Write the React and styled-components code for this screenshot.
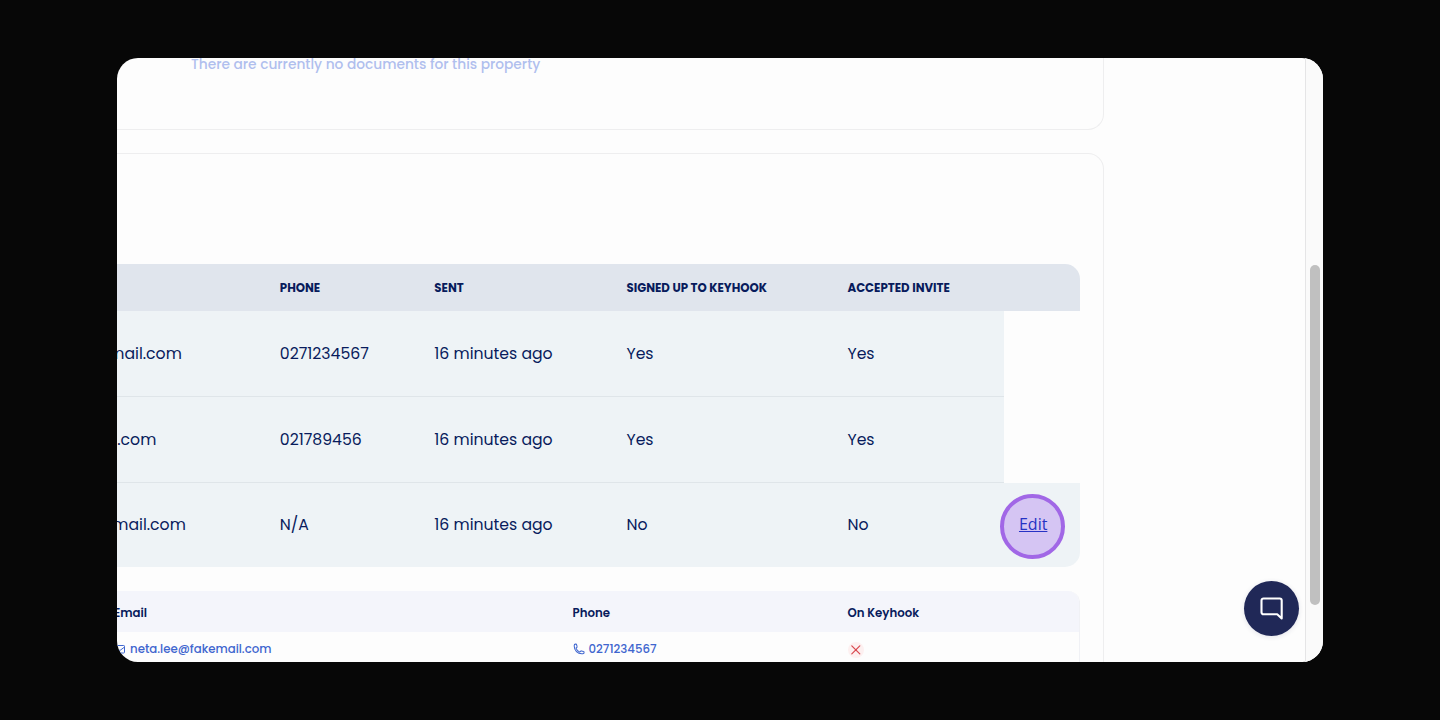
import React from 'react';
import styled, { createGlobalStyle } from 'styled-components';

const colors = {
  backdrop: '#070707',
  white: '#fdfdfd',
  navy: '#081b5c',
  link: '#3f66cf',
  faded: '#b0bfee',
  border: '#eeeeef',
  tableHead: '#e0e5ed',
  tableRow: '#eef3f6',
  contactsHead: '#f4f5fb',
  purple: '#a167e6',
};

const GlobalStyle = createGlobalStyle`
  * {
    box-sizing: border-box;
  }
  body {
    margin: 0;
    background: ${colors.backdrop};
    font-family: Poppins, Inter, sans-serif;
    color: ${colors.navy};
  }
`;

const Page = styled.div`
  height: 720px;
  padding: 58px 117px;
  overflow: hidden;
`;

const Window = styled.div`
  position: relative;
  display: flex;
  height: 604px;
  border-radius: 21px;
  overflow: hidden;
  background: ${colors.white};
`;

const Content = styled.main`
  flex: 1;
  min-width: 0;
  display: flex;
  flex-direction: column;
  align-items: flex-start;
  gap: 23px;
`;

const Card = styled.section`
  flex: none;
  width: 987px;
  border: 1px solid ${colors.border};
  border-left: 0;
`;

const DocumentsCard = styled(Card)`
  height: 72px;
  border-top: 0;
  border-radius: 0 0 16px 0;
  padding-left: 74px;
`;

const EmptyText = styled.p`
  margin: -4px 0 0;
  font-size: 13.75px;
  line-height: 22px;
  font-weight: 500;
  color: ${colors.faded};
`;

const TenantsCard = styled(Card)`
  height: 560px;
  border-radius: 0 16px 0 0;
  padding: 110px 23px 0 0;
`;

const InviteGrid = styled.div`
  display: grid;
  grid-template-columns: 138.8px 154.5px 192.2px 221px 180.5px 76px;
`;

const InviteHead = styled(InviteGrid)`
  height: 47px;
  padding-top: 1px;
  border-radius: 0 15px 0 0;
  background: ${colors.tableHead};
`;

const InviteRow = styled(InviteGrid)`
  height: ${(p) => (p.$last ? 84 : 86)}px;
  border-radius: 0 0 15px 0;
  overflow: hidden;
`;

const HeadCell = styled.div`
  display: flex;
  align-items: center;
  padding-left: 24px;
  font-size: 11.78px;
  font-weight: 700;
  white-space: nowrap;
`;

const Cell = styled.div`
  display: flex;
  align-items: center;
  padding: 0 0 ${(p) => (p.$last ? 1 : 0)}px 24px;
  font-size: 15.7px;
  white-space: nowrap;
  background: ${colors.tableRow};
  border-bottom: ${(p) => (p.$last ? 0 : 1)}px solid #dfe5e9;
`;

const EmailCell = styled(Cell)`
  justify-content: flex-end;
  padding-left: 0;
  padding-right: ${(p) => p.$space}px;
`;

const ActionCell = styled.div`
  display: flex;
  justify-content: center;
  align-items: center;
  padding-right: 18.6px;
  background: ${(p) => (p.$filled ? colors.tableRow : 'transparent')};
`;

const EditLink = styled.a`
  display: flex;
  justify-content: center;
  align-items: center;
  flex: none;
  width: 65px;
  height: 65px;
  margin-top: 2px;
  border: 4px solid ${colors.purple};
  border-radius: 50%;
  background: #d5c5f3;
  color: #2632c4;
  font-family: 'Open Sans', 'Noto Sans', sans-serif;
  font-size: 16px;
  line-height: 22px;
  text-decoration: underline;
  cursor: pointer;

  span {
    margin: -4px 0 0 1px;
  }
`;

const Contacts = styled.div`
  margin-top: 24px;
  height: 160px;
  border-right: 1px solid #f0f1f5;
  border-radius: 0 12px 0 0;
  overflow: hidden;
`;

const ContactsGrid = styled.div`
  display: grid;
  grid-template-columns: 455.5px 275px 1fr;
  align-items: center;
  font-size: 11.78px;
  white-space: nowrap;
`;

const ContactsHead = styled(ContactsGrid)`
  height: 41px;
  padding-top: 3px;
  font-weight: 600;
  background: ${colors.contactsHead};
`;

const ContactsRow = styled(ContactsGrid)`
  height: 34px;
  font-weight: 500;
  color: ${colors.link};
`;

const EmailTitle = styled.span`
  margin-left: -3px;
`;

const ContactItem = styled.span`
  display: flex;
  align-items: center;
  gap: 4px;
  margin-left: ${(p) => p.$shift || 0}px;
`;

const CrossBadge = styled.span`
  display: flex;
  justify-content: center;
  align-items: center;
  width: 16px;
  height: 16px;
  margin-top: 1px;
  border-radius: 50%;
  background: #fdf0f0;
`;

const ScrollTrack = styled.div`
  width: 18px;
  padding: 207px 3px 0 4px;
  border-left: 1px solid #e5e5e6;
  background: #fafafa;
`;

const ScrollThumb = styled.div`
  width: 10px;
  height: 340px;
  border-radius: 5px;
  background: #c0c0c0;
`;

const ChatButton = styled.button`
  position: absolute;
  right: 24px;
  bottom: 26px;
  display: flex;
  justify-content: center;
  align-items: center;
  width: 55px;
  height: 55px;
  padding: 0;
  border: 0;
  border-radius: 50%;
  background: #202857;
  box-shadow: 0 1px 5px rgba(32, 40, 87, 0.12);
`;

const invites = [
  { email: 'mail.com', space: 74, phone: '0271234567', sent: '16 minutes ago', signedUp: 'Yes', accepted: 'Yes' },
  { email: '.com', space: 99.5, phone: '021789456', sent: '16 minutes ago', signedUp: 'Yes', accepted: 'Yes' },
  { email: 'mail.com', space: 70, phone: 'N/A', sent: '16 minutes ago', signedUp: 'No', accepted: 'No', editable: true },
];

function MailIcon() {
  return (
    <svg width="11" height="11" viewBox="0 0 11 11" fill="none" stroke="currentColor" strokeWidth="1">
      <rect x="0.2" y="1.5" width="9.3" height="7.5" rx="0.8" />
      <path d="M0.5 3.2l4.4 3.3 4.4-3.3" />
    </svg>
  );
}

function PhoneIcon() {
  return (
    <svg width="12" height="12" viewBox="0 0 24 24" fill="none" stroke="currentColor" strokeWidth="2.1" strokeLinejoin="round">
      <path d="M2.5 6.5c0 8.3 6.7 15 15 15h2.2a2.2 2.2 0 0 0 2.3-2.2V18c0-.6-.4-1-.9-1.1l-4.4-1.1c-.5-.1-.9 0-1.2.4l-1 1.3c-.3.4-.8.5-1.2.4a12 12 0 0 1-7.1-7.1c-.2-.5 0-1 .4-1.2l1.2-1c.4-.3.6-.8.4-1.2L7.1 3.1c-.1-.5-.6-.9-1.1-.9H4.7A2.2 2.2 0 0 0 2.5 4.3z" />
    </svg>
  );
}

function CrossIcon() {
  return (
    <svg width="10" height="10" viewBox="0 0 10 10" fill="none" stroke="#d9484f" strokeWidth="1.2" strokeLinecap="round">
      <path d="M0.8 0.8l8 8M8.8 0.8l-8 8" />
    </svg>
  );
}

function ChatIcon() {
  return (
    <svg width="24" height="24" viewBox="0 0 24 24" fill="none" stroke="#fff" strokeWidth="2.1" strokeLinejoin="round">
      <path d="M21.7 21.5l-4.5-4.2H3.5a2 2 0 0 1-2-2V3.5a2 2 0 0 1 2-2h16.2a2 2 0 0 1 2 2z" />
    </svg>
  );
}

export default function App() {
  return (
    <Page>
      <GlobalStyle />
      <Window>
        <Content>
          <DocumentsCard>
            <EmptyText>There are currently no documents for this property</EmptyText>
          </DocumentsCard>

          <TenantsCard>
            <InviteHead>
              <HeadCell />
              <HeadCell>PHONE</HeadCell>
              <HeadCell>SENT</HeadCell>
              <HeadCell>SIGNED UP TO KEYHOOK</HeadCell>
              <HeadCell>ACCEPTED INVITE</HeadCell>
              <HeadCell />
            </InviteHead>
            {invites.map((invite, i) => {
              const last = i === invites.length - 1;
              return (
                <InviteRow key={invite.phone} $last={last}>
                  <EmailCell $space={invite.space} $last={last}>{invite.email}</EmailCell>
                  <Cell $last={last}>{invite.phone}</Cell>
                  <Cell $last={last}>{invite.sent}</Cell>
                  <Cell $last={last}>{invite.signedUp}</Cell>
                  <Cell $last={last}>{invite.accepted}</Cell>
                  <ActionCell $filled={invite.editable}>
                    {invite.editable && (
                      <EditLink>
                        <span>Edit</span>
                      </EditLink>
                    )}
                  </ActionCell>
                </InviteRow>
              );
            })}

            <Contacts>
              <ContactsHead>
                <EmailTitle>Email</EmailTitle>
                <span>Phone</span>
                <span>On Keyhook</span>
              </ContactsHead>
              <ContactsRow>
                <ContactItem $shift={-2}>
                  <MailIcon />
                  neta.lee@fakemail.com
                </ContactItem>
                <ContactItem>
                  <PhoneIcon />
                  0271234567
                </ContactItem>
                <CrossBadge>
                  <CrossIcon />
                </CrossBadge>
              </ContactsRow>
            </Contacts>
          </TenantsCard>
        </Content>

        <ScrollTrack>
          <ScrollThumb />
        </ScrollTrack>

        <ChatButton aria-label="Chat">
          <ChatIcon />
        </ChatButton>
      </Window>
    </Page>
  );
}
